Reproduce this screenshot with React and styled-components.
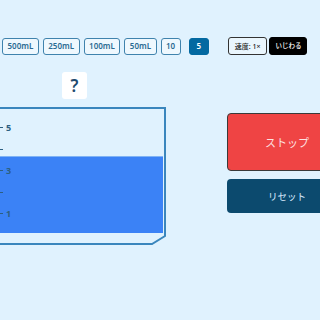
import React from 'react'
import styled, { createGlobalStyle } from 'styled-components'

const GlobalStyle = createGlobalStyle`
  html, body {
    margin: 0;
    padding: 0;
    background: #e0f2fe;
    overflow: hidden;
  }
  body {
    font-family: "Noto Sans", "Noto Sans CJK JP", sans-serif;
  }
`

const Page = styled.div`
  width: 320px;
  height: 320px;
  overflow: hidden;
  padding-top: 37px;
  box-sizing: border-box;
`

const Toolbar = styled.div`
  display: flex;
  align-items: center;
  margin-left: 2px;
  gap: 4px;
  width: max-content;
`

const SizeButton = styled.button`
  flex-shrink: 0;
  white-space: nowrap;
  height: 17px;
  padding: 0 4.5px;
  border: 1.5px solid ${(p) => (p.$active ? '#0369a1' : '#3f83ad')};
  border-radius: 3px;
  background: ${(p) => (p.$active ? '#0369a1' : '#eef8fe')};
  color: ${(p) => (p.$active ? '#ffffff' : '#2a6b93')};
  font-family: "Noto Sans", sans-serif;
  font-size: 8px;
  font-weight: 600;
  line-height: 1;
  margin-left: ${(p) => (p.$active ? '4px' : '0')};
  min-width: ${(p) => (p.$narrow ? '20px' : '0')};
`

const SpeedButton = styled.button`
  flex-shrink: 0;
  white-space: nowrap;
  height: 18px;
  margin-left: 15px;
  padding: 0 6px;
  border: 1.5px solid #333;
  border-radius: 3px;
  background: #eaf6fd;
  color: #222;
  font-family: "Noto Sans", "Noto Sans CJK JP", sans-serif;
  font-size: 7px;
  font-weight: 500;
  line-height: 1;
`

const MeanButton = styled(SpeedButton)`
  margin-left: -2px;
  background: #000;
  color: #fff;
  border-color: #000;
  padding: 0 5px;
  font-size: 6.5px;
`

const Main = styled.div`
  display: flex;
  align-items: flex-start;
  margin-left: -17px;
  margin-top: 17px;
`

const LeftColumn = styled.div`
  display: flex;
  flex-direction: column;
  align-items: center;
  gap: 8px;
  width: 183px;
  flex-shrink: 0;
`

const Question = styled.div`
  width: 25px;
  height: 27px;
  background: #fff;
  border-radius: 3px;
  display: flex;
  align-items: center;
  justify-content: center;
  color: #1e4a6e;
  font-size: 17px;
  font-weight: 600;
`

const Beaker = styled.div`
  position: relative;
  width: 183px;
  height: 138px;
  box-sizing: border-box;
  padding: 48px 3px 12px 0;
  display: flex;
  flex-direction: column;
  justify-content: flex-end;
`

const Outline = styled.svg`
  position: absolute;
  inset: 0;
  pointer-events: none;
`

const Liquid = styled.div`
  background: #3b82f6;
  border-top: 1px solid #7fb3f5;
  box-sizing: border-box;
`

const Scale = styled.div`
  position: absolute;
  left: 17px;
  top: 10px;
  display: flex;
  flex-direction: column;
`

const Tick = styled.div`
  height: 21.5px;
  display: flex;
  align-items: center;
  gap: 3px;
  color: #2c5f82;
  font-size: 9px;
  font-weight: 700;
`

const Dash = styled.span`
  width: 3px;
  height: 1px;
  background: #2c5f82;
`

const RightColumn = styled.div`
  display: flex;
  flex-direction: column;
  gap: 8px;
  margin-left: 61px;
  margin-top: 41px;
  flex-shrink: 0;
`

const StopButton = styled.button`
  width: 120px;
  height: 58px;
  border: 1px solid #3a3a3a;
  border-radius: 4px;
  background: #ef4444;
  color: #fde2e2;
  font-family: "Noto Sans CJK JP", sans-serif;
  font-size: 11px;
`

const ResetButton = styled.button`
  width: 120px;
  height: 34px;
  border: none;
  border-radius: 4px;
  background: #0c4a6e;
  color: #dbeafe;
  font-family: "Noto Sans CJK JP", sans-serif;
  font-size: 9.5px;
`

const sizes = ['500mL', '250mL', '100mL', '50mL', '10']
const ticks = ['5', '', '3', '', '1']

export default function App() {
  const level = 77
  return (
    <>
      <GlobalStyle />
      <Page>
        <Toolbar>
          {sizes.map((s) => (
            <SizeButton key={s} $narrow={s === '10'}>
              {s}
            </SizeButton>
          ))}
          <SizeButton $active $narrow>
            5
          </SizeButton>
          <SpeedButton>速度: 1×</SpeedButton>
          <MeanButton>いじわる</MeanButton>
        </Toolbar>
        <Main>
          <LeftColumn>
            <Question>?</Question>
            <Beaker>
              <Liquid style={{ height: level }} />
              <Outline width="183" height="138" viewBox="0 0 183 138">
                <path
                  d="M0 1 H182 V129 L169 137 H0"
                  fill="none"
                  stroke="#3a86bd"
                  strokeWidth="2"
                />
              </Outline>
              <Scale>
                {ticks.map((t, i) => (
                  <Tick key={i}>
                    <Dash />
                    {t}
                  </Tick>
                ))}
              </Scale>
            </Beaker>
          </LeftColumn>
          <RightColumn>
            <StopButton>ストップ</StopButton>
            <ResetButton>リセット</ResetButton>
          </RightColumn>
        </Main>
      </Page>
    </>
  )
}
